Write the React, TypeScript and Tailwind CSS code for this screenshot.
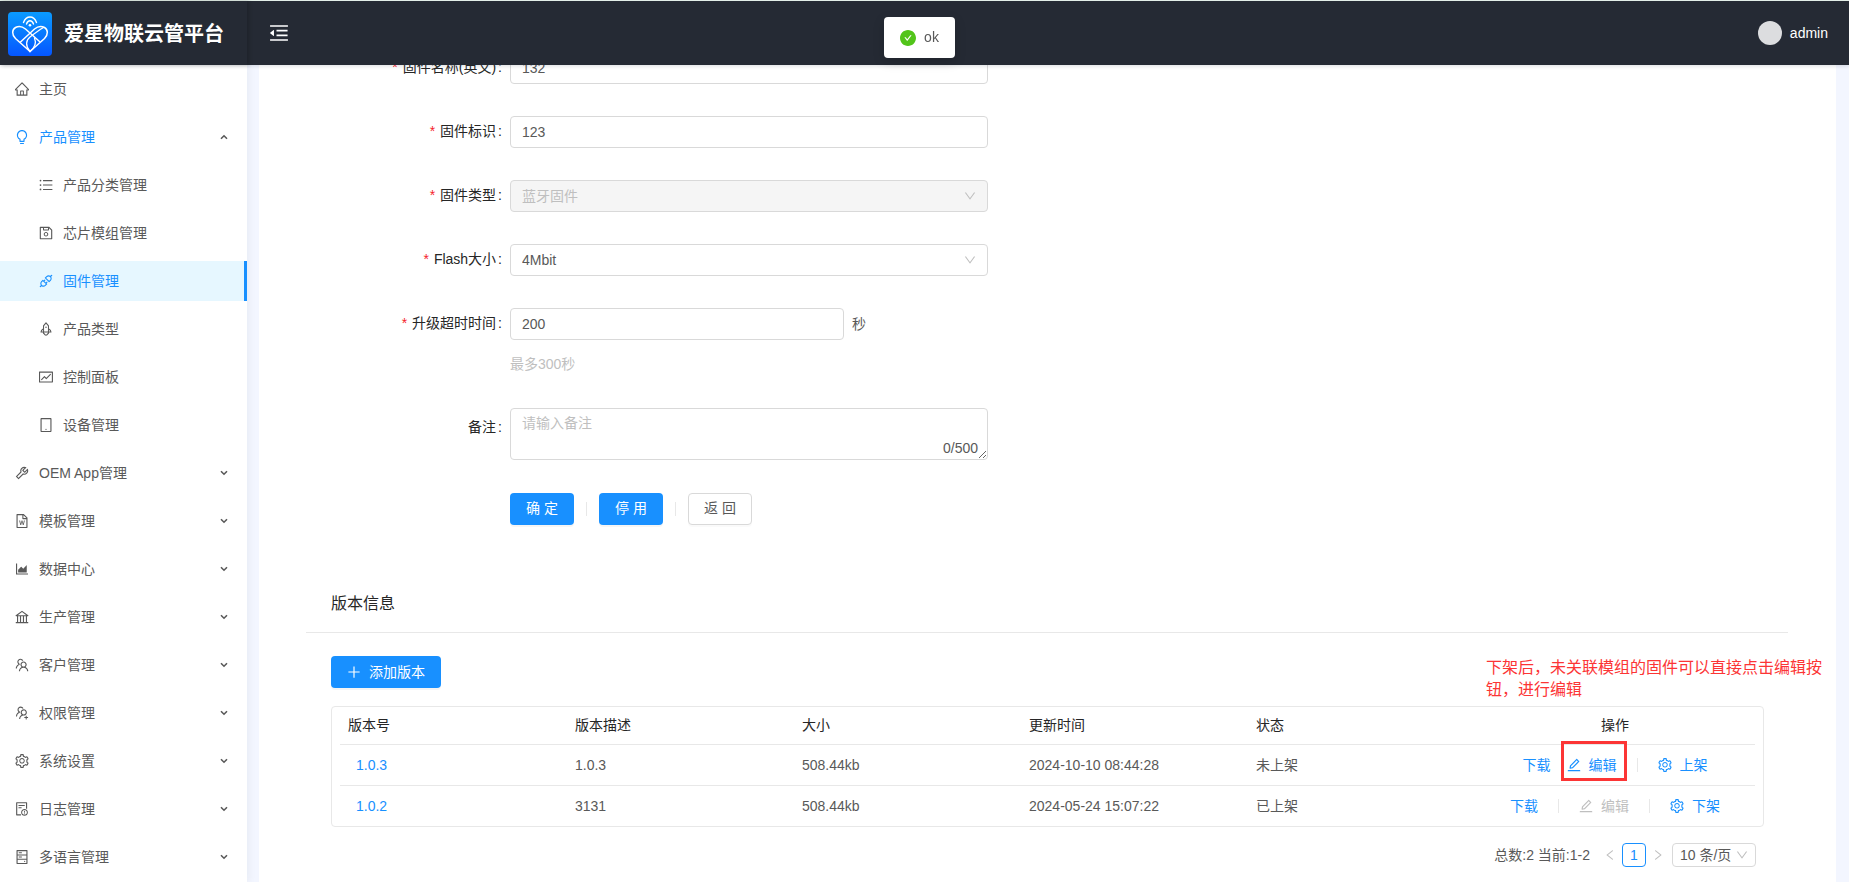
import type { ReactNode } from 'react'
import type { IconType } from 'react-icons'
import {
  AiFillCheckCircle,
  AiOutlineApi,
  AiOutlineAreaChart,
  AiOutlineBank,
  AiOutlineBulb,
  AiOutlineDown,
  AiOutlineEdit,
  AiOutlineException,
  AiOutlineFileWord,
  AiOutlineFund,
  AiOutlineHdd,
  AiOutlineHome,
  AiOutlineLeft,
  AiOutlineMenuFold,
  AiOutlinePlus,
  AiOutlineRight,
  AiOutlineRocket,
  AiOutlineSave,
  AiOutlineSetting,
  AiOutlineTablet,
  AiOutlineTeam,
  AiOutlineTool,
  AiOutlineUnorderedList,
  AiOutlineUsergroupAdd
} from 'react-icons/ai'

interface MenuItem {
  label: string
  icon: IconType
  active?: boolean
  children?: MenuItem[]
}

const menu: MenuItem[] = [
  { label: '主页', icon: AiOutlineHome },
  {
    label: '产品管理',
    icon: AiOutlineBulb,
    active: true,
    children: [
      { label: '产品分类管理', icon: AiOutlineUnorderedList },
      { label: '芯片模组管理', icon: AiOutlineSave },
      { label: '固件管理', icon: AiOutlineApi, active: true },
      { label: '产品类型', icon: AiOutlineRocket },
      { label: '控制面板', icon: AiOutlineFund },
      { label: '设备管理', icon: AiOutlineTablet }
    ]
  },
  { label: 'OEM App管理', icon: AiOutlineTool, children: [] },
  { label: '模板管理', icon: AiOutlineFileWord, children: [] },
  { label: '数据中心', icon: AiOutlineAreaChart, children: [] },
  { label: '生产管理', icon: AiOutlineBank, children: [] },
  { label: '客户管理', icon: AiOutlineTeam, children: [] },
  { label: '权限管理', icon: AiOutlineUsergroupAdd, children: [] },
  { label: '系统设置', icon: AiOutlineSetting, children: [] },
  { label: '日志管理', icon: AiOutlineException, children: [] },
  { label: '多语言管理', icon: AiOutlineHdd, children: [] }
]

const versions = [
  { id: '1.0.3', desc: '1.0.3', size: '508.44kb', time: '2024-10-10 08:44:28', status: '未上架', online: false },
  { id: '1.0.2', desc: '3131', size: '508.44kb', time: '2024-05-24 15:07:22', status: '已上架', online: true }
]

const fieldClass = 'h-8 w-full rounded-sm border border-[#d9d9d9] bg-white px-[11px] text-[#595959] outline-none'

interface IconProps {
  as: IconType
  size?: number
  className?: string
}

// antd glyphs carry a 64 unit margin, crop it so they fill the box
function Icon({ as: Glyph, size = 14, className = '' }: IconProps) {
  return <Glyph size={size} viewBox="64 64 896 896" className={`shrink-0 ${className}`} />
}

function Logo() {
  return (
    <svg viewBox="0 0 44 44" className="size-11 shrink-0" fill="none" stroke="#fff" strokeLinecap="round" strokeLinejoin="round">
      <defs>
        <linearGradient id="logo-bg" x1="0" y1="0" x2="0" y2="1">
          <stop offset="0" stopColor="#0a9bff" />
          <stop offset="1" stopColor="#0556ff" />
        </linearGradient>
      </defs>
      <rect width="44" height="44" rx="4" fill="url(#logo-bg)" stroke="none" />
      <path strokeWidth="1.5" d="M22 39.5 7.5 26.5C3.5 22.5 4 17.5 7.5 15.5c3.500-2 7-1 10 1.500L31.500 29.500" />
      <path strokeWidth="1.5" d="M22 39.500 36.500 26.500C40.500 22.500 40 17.500 36.500 15.500c-3.500-2-7-1-10 1.500L12.500 30" />
      <path strokeWidth="1.3" d="M22 39.500c-5-5.500-4-11.500 0-14.500 4.500-3.500 8.500-6.500 13.500-9.500M22 39.500c5-4 6.500-8.500 4.500-13.500" />
      <path strokeWidth="1.4" d="M15.500 10.500C17 6.500 19.500 5 22 5s5 1.500 6.500 5.500M18.500 12c.8-2.300 2-3.200 3.500-3.200s2.700.9 3.500 3.200" />
      <circle cx="22" cy="13.300" r="1.300" fill="#fff" stroke="none" />
    </svg>
  )
}

function MenuArrow({ open }: { open?: boolean }) {
  return (
    <svg viewBox="0 0 8 8" className="ml-auto mr-[19px] size-2" fill="none" stroke="#595959" strokeWidth="1.6">
      <path d={open ? 'M1 5.800 4 2.800 7 5.800' : 'M1 2.200 4 5.200 7 2.200'} />
    </svg>
  )
}

function Sidebar() {
  return (
    <nav className="z-10 w-[247px] shrink-0 overflow-hidden bg-white pt-1 shadow-[2px_0_8px_rgba(29,35,41,0.05)]">
      <ul className="flex flex-col gap-2">
        {menu.map((item) => (
          <li key={item.label}>
            {item.children ? (
              <button className={`flex h-10 w-full items-center gap-2.5 pl-[15px] ${item.active ? 'text-[#1890ff]' : ''}`}>
                <Icon as={item.icon} />
                {item.label}
                <MenuArrow open={item.active} />
              </button>
            ) : (
              <a href="#" className="flex h-10 items-center gap-2.5 pl-[15px]">
                <Icon as={item.icon} />
                {item.label}
              </a>
            )}
            {item.active && (
              <ul className="mt-2 flex flex-col gap-2">
                {item.children?.map((child) => (
                  <li key={child.label}>
                    <a
                      href="#"
                      className={`flex h-10 items-center gap-2.5 pl-[39px] ${child.active ? 'border-r-[3px] border-[#1890ff] bg-[#e6f7ff] text-[#1890ff]' : ''}`}
                    >
                      <Icon as={child.icon} />
                      {child.label}
                    </a>
                  </li>
                ))}
              </ul>
            )}
          </li>
        ))}
      </ul>
    </nav>
  )
}

interface FormRowProps {
  label: string
  htmlFor: string
  required?: boolean
  children: ReactNode
}

function FormRow({ label, htmlFor, required, children }: FormRowProps) {
  return (
    <div className="flex min-h-10">
      <label htmlFor={htmlFor} className="w-[251px] shrink-0 pr-2 text-right leading-[38px] text-[#262626]">
        {required && <span className="mr-[5px] text-[#f5222d]">*</span>}
        {label}
        <span className="ml-0.5">:</span>
      </label>
      <div className="w-[478px]">{children}</div>
    </div>
  )
}

function SelectArrow() {
  return <Icon as={AiOutlineDown} size={12} className="pointer-events-none absolute right-3 top-2.5 text-[#bfbfbf]" />
}

function FirmwareForm() {
  return (
    <form className="flex flex-col gap-6">
      <FormRow label="固件名称(英文)" htmlFor="name-en" required>
        <input id="name-en" className={`mt-1 ${fieldClass}`} defaultValue="132" />
      </FormRow>
      <FormRow label="固件标识" htmlFor="key" required>
        <input id="key" className={`mt-1 ${fieldClass}`} defaultValue="123" />
      </FormRow>
      <FormRow label="固件类型" htmlFor="type" required>
        <div className="relative mt-1">
          <select
            id="type"
            disabled
            className="h-8 w-full appearance-none rounded-sm border border-[#d9d9d9] bg-[#f5f5f5] px-[11px] text-[#bfbfbf] opacity-100"
          >
            <option>蓝牙固件</option>
          </select>
          <SelectArrow />
        </div>
      </FormRow>
      <FormRow label="Flash大小" htmlFor="flash" required>
        <div className="relative mt-1">
          <select id="flash" className={`appearance-none ${fieldClass}`}>
            <option>4Mbit</option>
          </select>
          <SelectArrow />
        </div>
      </FormRow>
      <FormRow label="升级超时时间" htmlFor="timeout" required>
        <div className="flex h-10 items-center gap-2">
          <div className="w-[334px]">
            <input id="timeout" className={fieldClass} defaultValue="200" />
          </div>
          秒
        </div>
        <p className="leading-10 text-[#bfbfbf]">最多300秒</p>
      </FormRow>
      <FormRow label="备注" htmlFor="remark">
        <div className="relative">
          <textarea
            id="remark"
            placeholder="请输入备注"
            className="block h-[52px] w-full resize-y rounded-sm border border-[#d9d9d9] px-[11px] py-1 leading-[21px] outline-none placeholder:text-[#bfbfbf]"
          />
          <span className="pointer-events-none absolute bottom-0.5 right-2.5 leading-5">0/500</span>
        </div>
      </FormRow>
      <div className="mt-[9px] flex items-center pl-[251px]">
        <button type="button" className="h-8 w-16 rounded-sm bg-[#1890ff] pb-0.5 text-white shadow-[0_2px_0_rgba(0,0,0,0.04)]">确 定</button>
        <span className="mx-3 h-3.5 w-px bg-[#e8e8e8]" />
        <button type="button" className="h-8 w-16 rounded-sm bg-[#1890ff] pb-0.5 text-white shadow-[0_2px_0_rgba(0,0,0,0.04)]">停 用</button>
        <span className="mx-3 h-3.5 w-px bg-[#e8e8e8]" />
        <button type="button" className="h-8 w-16 rounded-sm border border-[#d9d9d9] bg-white pb-0.5 shadow-[0_2px_0_rgba(0,0,0,0.02)]">返 回</button>
      </div>
    </form>
  )
}

function ActionDivider() {
  return <span className="mx-3 h-3.5 w-px bg-[#e8e8e8]" />
}

function RowActions({ online }: { online: boolean }) {
  return (
    <div className="flex items-center justify-center text-[#1890ff]">
      <button className="h-6 px-2">下载</button>
      {online && <ActionDivider />}
      <div className="relative">
        <button disabled={online} className="flex h-6 items-center gap-2 px-2 disabled:text-[#bfbfbf]">
          <Icon as={AiOutlineEdit} />
          编辑
        </button>
        {!online && <span className="pointer-events-none absolute -bottom-1 -right-0.5 -top-3 left-0.5 border-[3px] border-[#fc3535]" />}
      </div>
      <ActionDivider />
      <button className="flex h-6 items-center gap-2 px-2">
        <Icon as={AiOutlineSetting} />
        {online ? '下架' : '上架'}
      </button>
    </div>
  )
}

function VersionTable() {
  return (
    <div className="rounded border border-[#e8e8e8] px-2">
      <table className="w-full table-fixed text-left">
        <thead>
          <tr className="h-[37px] border-b border-[#e8e8e8] text-[#262626]">
            <th className="px-2 font-normal">版本号</th>
            <th className="px-2 font-normal">版本描述</th>
            <th className="px-2 font-normal">大小</th>
            <th className="px-2 font-normal">更新时间</th>
            <th className="px-2 font-normal">状态</th>
            <th className="w-[280px] text-center font-normal">操作</th>
          </tr>
        </thead>
        <tbody>
          {versions.map((v) => (
            <tr key={v.id} className="h-[41px] border-b border-[#e8e8e8] last:border-b-0">
              <td className="px-4">
                <a href="#" className="text-[#1890ff]">{v.id}</a>
              </td>
              <td className="px-2">{v.desc}</td>
              <td className="px-2">{v.size}</td>
              <td className="px-2">{v.time}</td>
              <td className="px-2">{v.status}</td>
              <td>
                <RowActions online={v.online} />
              </td>
            </tr>
          ))}
        </tbody>
      </table>
    </div>
  )
}

function Pagination() {
  return (
    <div className="mt-4 flex items-center justify-end pr-2">
      <span className="mr-2">总数:2 当前:1-2</span>
      <button aria-label="上一页" className="flex size-6 items-center justify-center text-[#bfbfbf]">
        <Icon as={AiOutlineLeft} size={12} />
      </button>
      <button className="size-6 rounded border border-[#1890ff] text-[#1890ff]">1</button>
      <button aria-label="下一页" className="flex size-6 items-center justify-center text-[#bfbfbf]">
        <Icon as={AiOutlineRight} size={12} />
      </button>
      <div className="relative ml-0.5">
        <select aria-label="每页条数" className="h-6 w-[84px] appearance-none rounded border border-[#d9d9d9] bg-white px-[7px] outline-none">
          <option>10 条/页</option>
        </select>
        <Icon as={AiOutlineDown} size={12} className="pointer-events-none absolute right-2 top-1.5 text-[#bfbfbf]" />
      </div>
    </div>
  )
}

export default function App() {
  return (
    <div className="flex h-screen flex-col overflow-hidden bg-[#f3f6ff] font-['Liberation_Sans','Noto_Sans_CJK_SC',sans-serif] text-sm text-[#595959]">
      <header className="z-20 flex h-[65px] shrink-0 items-stretch border-t border-[#e3efe8] bg-[#252a34] text-white shadow-[0_1px_4px_rgba(0,21,41,0.15)]">
        <div className="flex w-[247px] items-center gap-3 pl-2 pt-0.5 shadow-[2px_0_4px_rgba(0,0,0,0.2)]">
          <Logo />
          <h1 className="text-xl font-bold">爱星物联云管平台</h1>
        </div>
        <button aria-label="收起菜单" className="ml-[22px]">
          <Icon as={AiOutlineMenuFold} size={20} />
        </button>
        <div className="ml-auto mr-[21px] flex items-center gap-2">
          <span className="size-6 rounded-full bg-[#dcdddf]" />
          admin
        </div>
      </header>

      <div className="flex min-h-0 flex-1">
        <Sidebar />
        <main className="min-w-0 flex-1 overflow-hidden pl-3 pr-[13px]">
          {/* scrolled down past the first fields */}
          <div className="-mt-[17px] min-h-full bg-white pb-8">
            <FirmwareForm />
            <section className="relative ml-[47px] mr-12 mt-[50px]">
              <h2 className="border-b border-[#e8e8e8] px-[25px] text-base leading-[57px] text-[#262626]">版本信息</h2>
              <p className="absolute -right-[34px] top-[82px] w-[336px] text-base leading-[22px] text-[#fc3535]">
                下架后，未关联模组的固件可以直接点击编辑按钮，进行编辑
              </p>
              <div className="pl-[25px] pr-6 pt-[23px]">
                <button className="mb-[18px] flex h-8 items-center gap-2 rounded-sm bg-[#1890ff] px-4 text-white shadow-[0_2px_0_rgba(0,0,0,0.04)]">
                  <Icon as={AiOutlinePlus} />
                  添加版本
                </button>
                <VersionTable />
                <Pagination />
              </div>
            </section>
          </div>
        </main>
      </div>

      <div role="status" className="pointer-events-none fixed inset-x-0 top-[17px] z-30 flex justify-center pr-2.5">
        <div className="flex items-center gap-2 rounded-sm bg-white px-4 py-2.5 leading-[21px] shadow-[0_4px_12px_rgba(0,0,0,0.15)]">
          <Icon as={AiFillCheckCircle} size={16} className="text-[#52c41a]" />
          ok
        </div>
      </div>
    </div>
  )
}
